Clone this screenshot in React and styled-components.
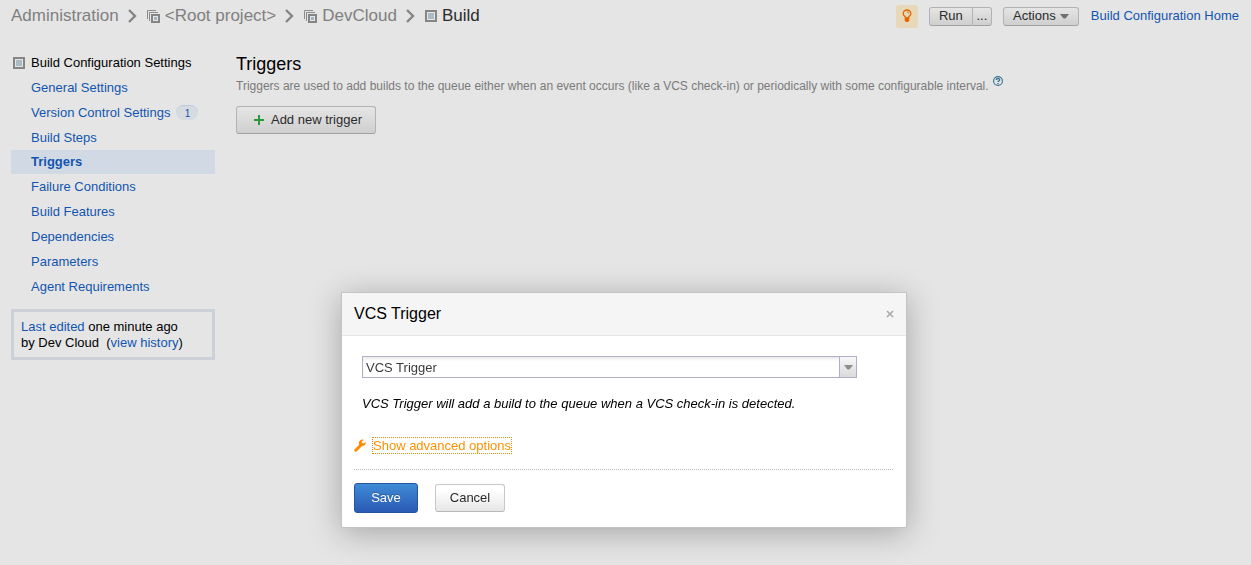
import React from "react";
import styled, { createGlobalStyle, css } from "styled-components";

const GlobalStyle = createGlobalStyle`
  *, *::before, *::after { box-sizing: border-box; }
  html, body { height: 100%; }
  body {
    margin: 0;
    background: #e5e5e5;
    color: #000;
    font: 13px/16px "Liberation Sans", Arial, sans-serif;
  }
  button, select { font: inherit; }
  h1, h2, p, ul, ol { margin: 0; padding: 0; font-weight: normal; }
  ul, ol { list-style: none; }
  svg { display: block; flex: none; }
`;

const Link = styled.a`
  color: #1255b0;
  text-decoration: none;
`;

const TopBar = styled.header`
  display: flex;
  align-items: center;
  justify-content: space-between;
  height: 32px;
  padding: 0 12px 0 11px;
`;

const Crumbs = styled.ol`
  display: flex;
  align-items: center;
  font-size: 17px;
  line-height: 22px;
`;

const Crumb = styled.li`
  display: flex;
  align-items: center;
  gap: 5px;
  white-space: nowrap;
  color: #2b2b2b;
`;

const CrumbLink = styled.a`
  display: flex;
  align-items: center;
  gap: 5px;
  color: #808080;
  text-decoration: none;
`;

const Divider = styled.svg`
  margin: 0 4px;
`;

const Actions = styled.div`
  display: flex;
  align-items: center;
`;

const Tip = styled.button`
  display: flex;
  align-items: center;
  justify-content: center;
  width: 22px;
  height: 23px;
  margin-right: 11px;
  padding: 0;
  border: 0;
  border-radius: 3px;
  background: #e6d8b8;
`;

const button = css`
  display: flex;
  align-items: center;
  justify-content: center;
  padding: 0;
  border: 1px solid #b3b3b3;
  border-bottom-color: #a2a2a2;
  border-radius: 3px;
  background: linear-gradient(#e5e5e5, #cfcfcf);
  color: #2b2b2b;
  white-space: nowrap;
`;

const SmallButton = styled.button`
  ${button}
  width: ${(p) => p.$width}px;
  height: 19px;
  gap: 4px;
`;

const SplitButton = styled.div`
  display: flex;
  margin-right: 11px;

  ${SmallButton}:first-child { border-radius: 3px 0 0 3px; }
  ${SmallButton}:last-child { border-left: 0; border-radius: 0 3px 3px 0; }
`;

const HomeLink = styled(Link)`
  margin-left: 12px;
  white-space: nowrap;
`;

const Body = styled.div`
  display: flex;
  gap: 21px;
  padding: 18px 11px 0;
`;

const Sidebar = styled.aside`
  flex: none;
  width: 204px;
`;

const SideTitle = styled.div`
  display: flex;
  align-items: center;
  gap: 6px;
  height: 25px;
  padding-left: 2px;
  white-space: nowrap;
`;

const NavLink = styled(Link)`
  display: flex;
  align-items: center;
  gap: 6px;
  height: 25px;
  padding-left: 20px;
  ${(p) =>
    p.$active &&
    css`
      height: 24px;
      background: #d1dae4;
      font-weight: bold;
    `}
`;

const Count = styled.span`
  width: 22px;
  height: 15px;
  border-top: 1px solid #bccbdb;
  border-radius: 8px;
  background: #d5dbe0;
  font-size: 10px;
  line-height: 15px;
  text-align: center;
`;

const EditInfo = styled.div`
  margin-top: 10px;
  padding: 7px 7px 6px;
  border: 3px solid #ccd1d9;
`;

const Main = styled.main`
  flex: 1;
  min-width: 0;
  padding-top: 3px;
`;

const PageTitle = styled.h1`
  font-size: 18px;
  line-height: 22px;
`;

const Note = styled.p`
  display: flex;
  gap: 4px;
  height: 22px;
  padding-top: 3px;
  color: #7a7a7a;
  font-size: 12px;
`;

const HelpLink = styled.a`
  display: block;
  height: 10px;
  margin-top: -2px;
`;

const AddButton = styled.button`
  ${button}
  width: 140px;
  height: 28px;
  margin-top: 9px;
  padding-left: 4px;
  gap: 7px;
`;

const Overlay = styled.div`
  position: fixed;
  inset: 0;
  display: flex;
  align-items: flex-start;
  justify-content: center;
  padding: 292px 3px 0 0;
`;

const Dialog = styled.section`
  width: 566px;
  border: 1px solid #c4c4c4;
  background: #fff;
  box-shadow: 0 5px 30px rgba(0, 0, 0, 0.28);
`;

const DialogHeader = styled.header`
  display: flex;
  align-items: center;
  justify-content: space-between;
  height: 43px;
  padding: 0 8px 0 12px;
  border-bottom: 1px solid #e5e5e5;
  background: #f5f5f5;
`;

const DialogTitle = styled.h2`
  font-size: 16px;
  line-height: 20px;
`;

const CloseButton = styled.button`
  padding: 4px;
  border: 0;
  background: none;
`;

const DialogForm = styled.form`
  padding: 20px 13px 14px 12px;
`;

const SelectBox = styled.div`
  position: relative;
  width: 495px;
  margin-left: 8px;
`;

const Select = styled.select`
  display: block;
  width: 100%;
  height: 22px;
  padding: 2px 20px 0 3px;
  appearance: none;
  border: 1px solid #b0b0c8;
  border-radius: 0;
  background: #fff;
  box-shadow: inset 0 2px 3px #eaeaea;
  color: #3c3c3c;
`;

const SelectArrow = styled.span`
  position: absolute;
  top: 1px;
  right: 1px;
  bottom: 1px;
  display: flex;
  align-items: center;
  justify-content: center;
  width: 17px;
  border-left: 1px solid #b0b0c8;
  background: linear-gradient(#f8f8f8, #dadada);
  pointer-events: none;
`;

const Description = styled.p`
  margin: 18px 0 0 8px;
  font-style: italic;
`;

const Advanced = styled.div`
  display: flex;
  align-items: center;
  gap: 6px;
  margin-top: 25px;
`;

const AdvancedLink = styled.a`
  border: 1px dotted #f7890b;
  color: #ff9000;
  line-height: 15px;
  text-decoration: none;
`;

const DialogFooter = styled.footer`
  display: flex;
  align-items: center;
  gap: 17px;
  margin-top: 15px;
  padding-top: 13px;
  border-top: 1px dotted #b8b8b8;
`;

const SaveButton = styled.button`
  width: 64px;
  height: 30px;
  padding: 0;
  border: 1px solid #2456a0;
  border-radius: 3px;
  background: linear-gradient(#3f8bd6, #2a5ab4);
  color: #fff;
  text-shadow: 0 -1px 0 rgba(0, 0, 0, 0.25);
`;

const CancelButton = styled.button`
  ${button}
  width: 70px;
  height: 28px;
  border-color: #c8c8c8;
  border-bottom-color: #b8b8b8;
  background: linear-gradient(#fff 20%, #e6e6e6);
`;

const BuildIcon = () => (
  <svg width="12" height="12" viewBox="0 0 12 12" aria-hidden="true">
    <path d="M0 0h12v12H0z" fill="#858585" />
    <path d="M2 2h8v8H2z" fill="#e5e5e5" />
    <path d="M3 3h6v6H3z" fill="#a9bbc4" />
  </svg>
);

const ProjectIcon = () => (
  <svg width="13" height="13" viewBox="0 0 13 13" aria-hidden="true">
    <path d="M.5 9V.5H9M2.500 11V2.500H11" fill="none" stroke="#8b8b8b" />
    <path d="M4 4h9v9H4z" fill="#858585" />
    <path d="M6 6h5v5H6z" fill="#e5e5e5" />
    <path d="M7 7h3v3H7z" fill="#9bb6c4" />
  </svg>
);

const Chevron = () => (
  <Divider width="20" height="16" viewBox="0 0 20 16" aria-hidden="true">
    <path d="M6 2l6 6-6 6" fill="none" stroke="#858585" strokeWidth="2.400" />
  </Divider>
);

const BulbIcon = () => (
  <svg width="10" height="14" viewBox="0 0 10 14" aria-hidden="true">
    <path
      d="M3.700 8.800C3.700 7.400 1.200 6.800 1.200 4.700a3.800 3.700 0 0 1 7.600 0c0 2.100-2.500 2.700-2.500 4.100z"
      fill="none"
      stroke="#e66400"
      strokeWidth="1.300"
    />
    <path d="M5 2.900a1.700 1.700 0 0 1 1.700 1.700" fill="none" stroke="#e66400" strokeWidth=".8" />
    <path d="M2.700 8.600h4.600v2.900L6 13H4l-1.300-1.500z" fill="#e66400" />
  </svg>
);

const Caret = ({ color }) => (
  <svg width="9" height="6" viewBox="0 0 9 6" aria-hidden="true">
    <path d="M0 1h9L5.500 5.500h-2z" fill={color} />
  </svg>
);

const navItems = [
  { label: "General Settings" },
  { label: "Version Control Settings", count: 1 },
  { label: "Build Steps" },
  { label: "Triggers", active: true },
  { label: "Failure Conditions" },
  { label: "Build Features" },
  { label: "Dependencies" },
  { label: "Parameters" },
  { label: "Agent Requirements" },
];

export default function App() {
  return (
    <>
      <GlobalStyle />
      <TopBar>
        <Crumbs>
          <Crumb>
            <CrumbLink href="#admin">Administration</CrumbLink>
          </Crumb>
          <Chevron />
          <Crumb>
            <CrumbLink href="#root-project">
              <ProjectIcon />
              &lt;Root project&gt;
            </CrumbLink>
          </Crumb>
          <Chevron />
          <Crumb>
            <CrumbLink href="#devcloud">
              <ProjectIcon />
              DevCloud
            </CrumbLink>
          </Crumb>
          <Chevron />
          <Crumb>
            <BuildIcon />
            Build
          </Crumb>
        </Crumbs>
        <Actions>
          <Tip type="button" aria-label="Suggestions">
            <BulbIcon />
          </Tip>
          <SplitButton>
            <SmallButton type="button" $width={44}>Run</SmallButton>
            <SmallButton type="button" $width={19}>...</SmallButton>
          </SplitButton>
          <SmallButton type="button" $width={76}>
            Actions
            <Caret color="#707070" />
          </SmallButton>
          <HomeLink href="#home">Build Configuration Home</HomeLink>
        </Actions>
      </TopBar>

      <Body>
        <Sidebar>
          <SideTitle>
            <BuildIcon />
            Build Configuration Settings
          </SideTitle>
          <nav>
            <ul>
              {navItems.map(({ label, count, active }) => (
                <li key={label}>
                  <NavLink href="#settings" $active={active}>
                    {label}
                    {count && <Count>{count}</Count>}
                  </NavLink>
                </li>
              ))}
            </ul>
          </nav>
          <EditInfo>
            <Link href="#last-edit">Last edited</Link> one minute ago
            <br />
            by Dev Cloud &nbsp;(<Link href="#history">view history</Link>)
          </EditInfo>
        </Sidebar>

        <Main>
          <PageTitle>Triggers</PageTitle>
          <Note>
            Triggers are used to add builds to the queue either when an event occurs (like a VCS
            check-in) or periodically with some configurable interval.
            <HelpLink href="#help" aria-label="Help">
              <svg width="10" height="10" viewBox="0 0 10 10" aria-hidden="true">
                <circle cx="5" cy="5" r="4.400" fill="none" stroke="#38718f" strokeWidth="1.100" />
                <path
                  d="M3.300 4C3.300 2 6.700 2 6.700 3.900 6.700 4.900 5 4.900 5 6.100M5 6.900v1.200"
                  fill="none"
                  stroke="#38718f"
                  strokeWidth="1.300"
                />
              </svg>
            </HelpLink>
          </Note>
          <AddButton type="button">
            <svg width="10" height="10" viewBox="0 0 10 10" aria-hidden="true">
              <path d="M5 0v10M0 5h10" stroke="#299a3a" strokeWidth="2" />
            </svg>
            Add new trigger
          </AddButton>
        </Main>
      </Body>

      <Overlay>
        <Dialog role="dialog" aria-labelledby="dialog-title">
          <DialogHeader>
            <DialogTitle id="dialog-title">VCS Trigger</DialogTitle>
            <CloseButton type="button" aria-label="Close">
              <svg width="8" height="8" viewBox="0 0 8 8" aria-hidden="true">
                <path d="M1 1l6 6M7 1L1 7" stroke="#a8a8a8" strokeWidth="1.500" />
              </svg>
            </CloseButton>
          </DialogHeader>
          <DialogForm>
            <SelectBox>
              <Select aria-label="Trigger type" defaultValue="vcs">
                <option value="vcs">VCS Trigger</option>
              </Select>
              <SelectArrow>
                <Caret color="#8d8d93" />
              </SelectArrow>
            </SelectBox>
            <Description>
              VCS Trigger will add a build to the queue when a VCS check-in is detected.
            </Description>
            <Advanced>
              <svg width="12" height="13" viewBox="0 0 12 13" aria-hidden="true">
                <path d="M1.800 11.200L7 6" stroke="#ff8a00" strokeWidth="3" strokeLinecap="round" />
                <path
                  d="M10.200.9A3.700 3.700 0 0 0 5 5.200a3.600 3.600 0 0 0 6.700-.9V3.100L9.300 4.500 7.800 3.700V2.300z"
                  fill="#ff8a00"
                />
              </svg>
              <AdvancedLink href="#advanced">Show advanced options</AdvancedLink>
            </Advanced>
            <DialogFooter>
              <SaveButton type="submit">Save</SaveButton>
              <CancelButton type="button">Cancel</CancelButton>
            </DialogFooter>
          </DialogForm>
        </Dialog>
      </Overlay>
    </>
  );
}
